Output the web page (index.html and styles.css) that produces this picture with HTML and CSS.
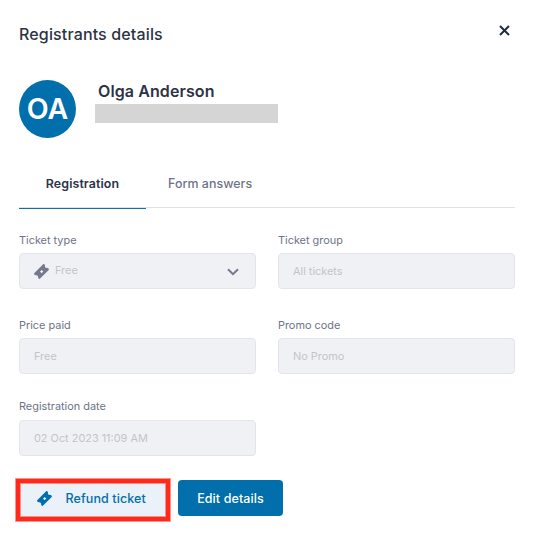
FILE: index.html
```html
<!DOCTYPE html>
<html lang="en">
<head>
  <meta charset="UTF-8">
  <title>Registrants details</title>
  <link rel="stylesheet" href="styles.css">
</head>
<body>
  <svg width="0" height="0" class="sprite">
    <symbol id="ticket" viewBox="0 0 14 14">
      <path fill-rule="evenodd" d="M8.3.4 C9-.1 9.6.1 10 .7 L10.3 1.5 C9.9 2.6 10.9 3.8 12.1 3.6 L13.2 3.9 C14.1 4.4 14.1 5.2 13.5 5.8 L5.7 13.5 C5.1 14.1 4.5 14 4.1 13.4 L3.8 12.6 C4.1 11.4 3.1 10.4 2 10.5 L.8 10.2 C0 9.8-.1 8.9.4 8.4 L8.3.4 Z M7.2 5.5 L5.6 7.1 L7.1 8.6 L8.7 7 Z"/>
    </symbol>
  </svg>

  <div class="panel">
    <div class="header">
      <h1>Registrants details</h1>
      <button class="close" aria-label="Close">
        <svg width="11" height="11" viewBox="0 0 11 11"><path d="M1 1l9 9M10 1l-9 9"/></svg>
      </button>
    </div>

    <div class="person">
      <div class="avatar">OA</div>
      <div class="person-info">
        <div class="name">Olga Anderson</div>
        <div class="redacted"></div>
      </div>
    </div>

    <div class="tabs">
      <div class="tab active">Registration</div>
      <div class="tab">Form answers</div>
    </div>

    <div class="fields">
      <div class="field">
        <label>Ticket type</label>
        <div class="input select">
          <svg class="ticket" width="15" height="15"><use href="#ticket"/></svg>
          <span>Free</span>
          <svg class="chevron" width="12" height="8" viewBox="0 0 12 8"><path d="M1 1.2l5 5 5-5"/></svg>
        </div>
      </div>
      <div class="field">
        <label>Ticket group</label>
        <div class="input">All tickets</div>
      </div>
      <div class="field">
        <label>Price paid</label>
        <div class="input">Free</div>
      </div>
      <div class="field">
        <label>Promo code</label>
        <div class="input">No Promo</div>
      </div>
      <div class="field date">
        <label>Registration date</label>
        <div class="input">02 Oct 2023 11:09 AM</div>
      </div>
    </div>

    <div class="actions">
      <button class="btn refund">
        <svg class="ticket" width="15" height="15"><use href="#ticket"/></svg>
        <span>Refund ticket</span>
      </button>
      <button class="btn edit">Edit details</button>
    </div>
  </div>
</body>
</html>
```
FILE: styles.css
```css
body {
  margin: 0;
  background: #fff;
  color: #2c3345;
  font-family: 'Inter', sans-serif;
}

.sprite {
  position: absolute;
}

svg {
  display: block;
  flex: none;
}

.panel {
  box-sizing: border-box;
  height: 533px;
  padding: 20px 18px 0 19px;
  overflow: hidden;
}

.header {
  display: flex;
  justify-content: space-between;
  height: 60px;
}

h1 {
  margin: 4px 0 0;
  font-size: 16px;
  font-weight: 450;
  line-height: 20px;
  letter-spacing: 0.14px;
}

.close {
  height: 20px;
  padding: 0;
  margin-right: 5px;
  border: none;
  background: none;
}

.close path {
  fill: none;
  stroke: #1f2d3d;
  stroke-width: 2;
}

.person {
  display: flex;
  gap: 18px;
  height: 80px;
}

.avatar {
  width: 57px;
  height: 58px;
  border-radius: 50%;
  background: #006fac;
  color: #fff;
  font-size: 28.5px;
  font-weight: 600;
  line-height: 58px;
  text-align: center;
}

.name {
  margin: 1px 0 3px 4px;
  font-size: 16px;
  font-weight: 580;
  line-height: 20px;
  letter-spacing: 0.1px;
}

.redacted {
  width: 183px;
  height: 19px;
  margin-left: 1px;
  background: #d5d5d5;
}

.tabs {
  display: flex;
  height: 47px;
  border-bottom: 1px solid #e2e2e6;
}

.tab {
  padding: 0 22px;
  color: #6d7386;
  font-size: 12.4px;
  font-weight: 470;
  line-height: 47px;
  letter-spacing: 0.05px;
}

.tab.active {
  box-sizing: border-box;
  width: 127px;
  height: 49px;
  padding: 0;
  border-bottom: 1px solid #0e71a6;
  color: #2c3345;
  font-weight: 600;
  letter-spacing: 0.1px;
  text-align: center;
}

.fields {
  display: grid;
  grid-template-columns: 237px 237px;
  grid-template-rows: 85px 81px 84px;
  column-gap: 22px;
  padding-top: 22px;
}

label {
  display: block;
  height: 23px;
  color: #6d7386;
  font-size: 10.9px;
  font-weight: 430;
  line-height: 20px;
}

.date label {
  height: 24px;
}

.input {
  display: flex;
  align-items: center;
  box-sizing: border-box;
  height: 36px;
  padding: 0 14px;
  border: 1px solid #e4e4ea;
  border-radius: 4px;
  background: #f0f1f5;
  color: #c3c4ca;
  font-size: 10.9px;
}

.date .input {
  padding-bottom: 1px;
}

.select span {
  flex: 1;
  margin: -2px 0 0 6px;
}

.select .ticket {
  fill: #75798c;
}

.chevron {
  margin: 1px 2px 0 0;
}

.chevron path {
  fill: none;
  stroke: #75798c;
  stroke-width: 2;
}

.actions {
  display: flex;
  gap: 13px;
}

.btn {
  height: 36px;
  padding: 0;
  border: none;
  border-radius: 4px;
  font-family: inherit;
  font-size: 12.5px;
  font-weight: 480;
  letter-spacing: 0.1px;
}

.refund {
  position: relative;
  display: flex;
  align-items: center;
  gap: 14px;
  width: 146px;
  padding-left: 17.5px;
  background: #eaf1f8;
  color: #006fac;
  fill: #006fac;
}

/* highlight frame around the refund button */
.refund::after {
  content: '';
  position: absolute;
  inset: -1px -5px -5px -3px;
  border: 4px solid #ff2a1c;
  box-shadow: 0 0 0 1px #ff948d, inset 0 0 0 1px #f98f8a;
}

.edit {
  width: 105px;
  background: #006fac;
  color: #fff;
}
```
